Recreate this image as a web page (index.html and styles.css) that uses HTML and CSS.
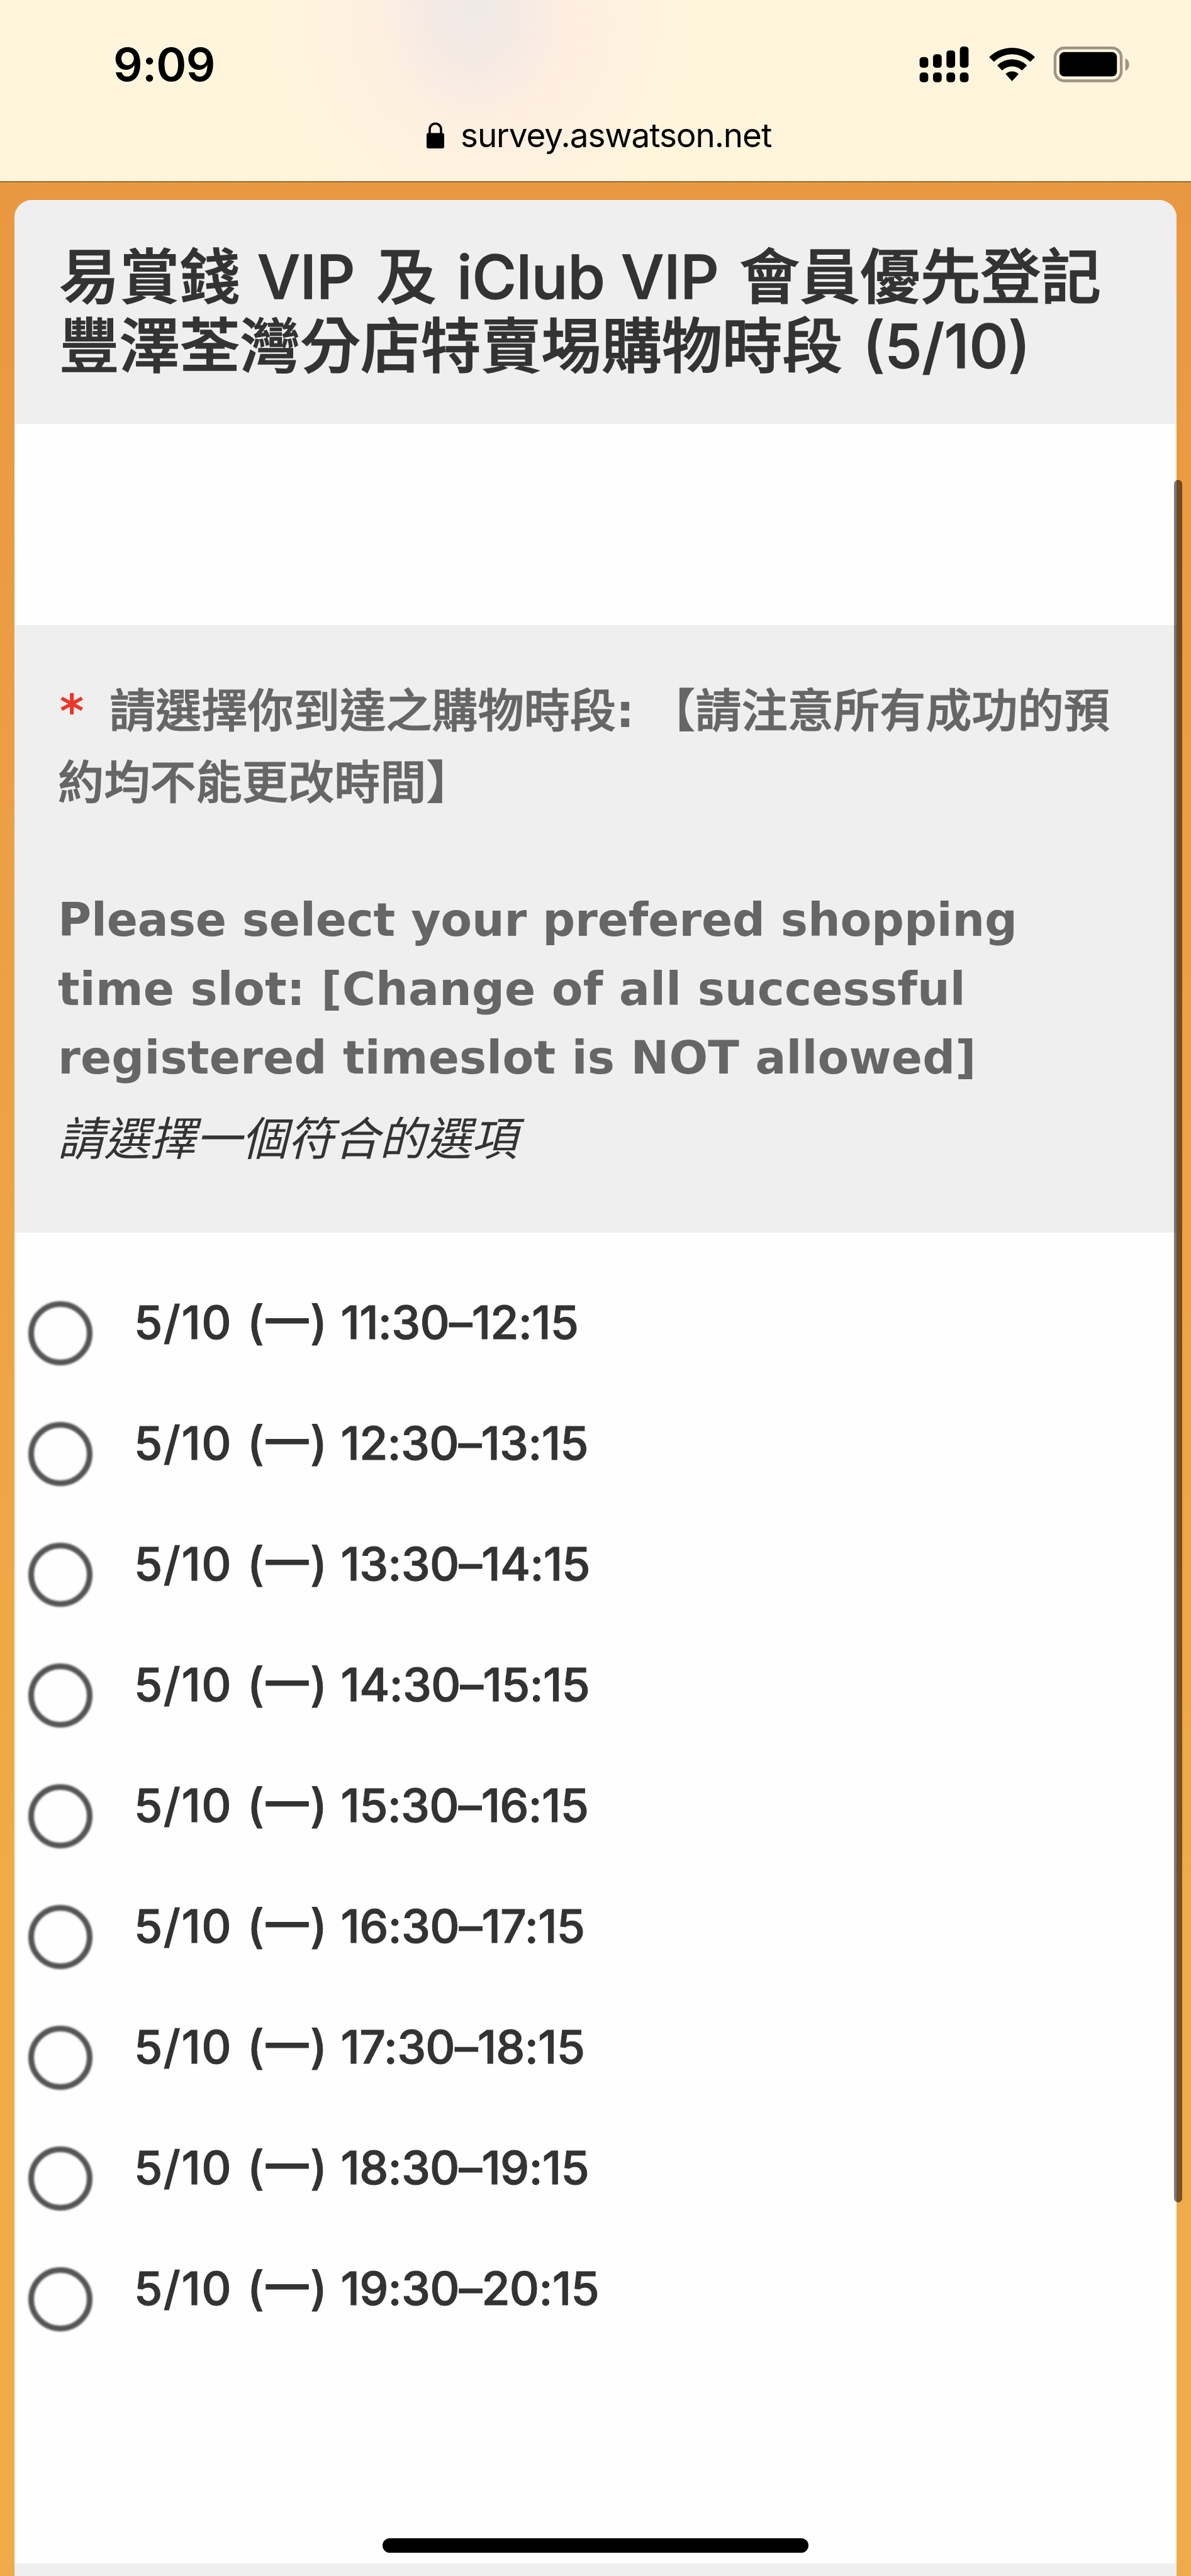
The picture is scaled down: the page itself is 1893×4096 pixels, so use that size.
FILE: index.html
```html
<!DOCTYPE html>
<html lang="zh-Hant">
<head>
    <meta charset="UTF-8">
    <meta name="viewport" content="width=device-width, initial-scale=1.0">
    <title>survey.aswatson.net</title>
    <link rel="stylesheet" href="styles.css">
</head>
<body>
<header class="browser-bar">
    <div class="status-row">
      <span class="clock">9:09</span>
      <svg class="status-icons" viewBox="1482 74 340 60">
        <g fill="#000">
          <rect x="1482.3" y="92" width="14" height="17.3" rx="5" />
          <rect x="1504" y="87.5" width="14" height="21.8" rx="5" />
          <rect x="1525.7" y="81.3" width="14" height="28" rx="5" />
          <rect x="1547.4" y="75" width="14" height="34.3" rx="5" />
          <rect x="1482.3" y="117" width="14" height="15.7" rx="5" />
          <rect x="1504" y="117" width="14" height="15.7" rx="5" />
          <rect x="1525.7" y="117" width="14" height="15.7" rx="5" />
          <rect x="1547.4" y="117" width="14" height="15.7" rx="5" />
          <path d="M1594.8 92a53 53 0 0 1 74 0l-7.5 7.7a42 42 0 0 0-59 0z" />
          <path d="M1607.8 105.5a34 34 0 0 1 48 0l-7.8 8.2a23 23 0 0 0-32.4 0z" />
          <path d="M1621.3 119.5a15 15 0 0 1 21 0l-10.5 11.5z" />
          <rect x="1708.3" y="84" width="93" height="39.3" rx="8" />
        </g>
        <rect x="1701.2" y="77.3" width="107" height="53.2" rx="15" fill="none" stroke="#9f9484" stroke-width="4.5" />
        <path d="M1814.8 94q6.2 3 6.2 10.2t-6.2 10.2z" fill="#9f9484" />
      </svg>
    </div>
    <div class="address">
      <svg class="lock" viewBox="0 0 28 42">
        <rect x="0" y="17.5" width="28" height="24.5" rx="3" />
        <path d="M5 19v-7.5a9 9 0 0 1 18 0V19" fill="none" stroke="#000" stroke-width="3.6" />
      </svg>
      <span>survey.aswatson.net</span>
    </div>
</header>

<main class="survey">
    <h1 class="survey-title">
      <span class="title-line">易賞錢 <span class="vip">VIP</span> 及 <span class="iclub">iClub VIP</span> 會員優先登記</span>
      <span class="title-line">豐澤荃灣分店特賣埸購物時段 <span class="date-suffix">(5/10)</span></span>
    </h1>

    <div class="question">
      <div class="question-zh"><span class="required">*</span>請選擇你到達之購物時段<span class="colon">:</span>【請注意所有成功的預<br>約均不能更改時間】</div>
      <div class="question-en">
        <span class="en-line tight">Please select your prefered shopping</span>
        <span class="en-line">time slot: [Change of all successful</span>
        <span class="en-line">registered timeslot is NOT allowed]</span>
      </div>
      <div class="hint">請選擇一個符合的選項</div>
    </div>

    <form class="options" id="slots">
      <label class="option"><input type="radio" name="slot"><span><span class="date">5/10</span> (一) <span class="time">11:30–12:15</span></span></label>
      <label class="option"><input type="radio" name="slot"><span><span class="date">5/10</span> (一) <span class="time">12:30–13:15</span></span></label>
      <label class="option"><input type="radio" name="slot"><span><span class="date">5/10</span> (一) <span class="time">13:30–14:15</span></span></label>
      <label class="option"><input type="radio" name="slot"><span><span class="date">5/10</span> (一) <span class="time">14:30–15:15</span></span></label>
      <label class="option"><input type="radio" name="slot"><span><span class="date">5/10</span> (一) <span class="time">15:30–16:15</span></span></label>
      <label class="option"><input type="radio" name="slot"><span><span class="date">5/10</span> (一) <span class="time">16:30–17:15</span></span></label>
      <label class="option"><input type="radio" name="slot"><span><span class="date">5/10</span> (一) <span class="time">17:30–18:15</span></span></label>
      <label class="option"><input type="radio" name="slot"><span><span class="date">5/10</span> (一) <span class="time">18:30–19:15</span></span></label>
      <label class="option"><input type="radio" name="slot"><span><span class="date">5/10</span> (一) <span class="time">19:30–20:15</span></span></label>
    </form>
    <div class="survey-footer"></div>
</main>

<div class="scrollbar"></div>
<div class="home-indicator"></div>
</body>
</html>
```
FILE: styles.css
```css
* {
  box-sizing: border-box;
}

body {
  margin: 0;
  height: 4096px;
  overflow: hidden;
  display: flex;
  flex-direction: column;
  position: relative;
  background: linear-gradient(#e89640, #f0aa49 3000px);
  font-family: Inter, "Noto Sans CJK TC", sans-serif;
  color: #333;
}

/* browser bar */
.browser-bar {
  flex: none;
  height: 290px;
  border-bottom: 2px solid #94693a;
  background:
    radial-gradient(ellipse 150px 190px at 752px 10px, #efe9e7 0%, rgba(243, 234, 228, 0.8) 50%, rgba(253, 238, 224, 0) 100%),
    radial-gradient(ellipse 330px 320px at 765px 40px, #feede1 30%, rgba(255, 240, 222, 0) 100%),
    #fff5dd;
  color: #000;
}

.status-row {
  display: flex;
  justify-content: space-between;
  height: 180px;
  padding: 73px 97px 0 180px;
}

.clock {
  font-size: 73px;
  font-weight: 600;
  letter-spacing: -0.8px;
  line-height: 60px;
}

.status-icons {
  width: 335px;
  height: 59px;
}

.address {
  display: flex;
  align-items: flex-start;
  padding: 14px 0 0 678px;
  font-size: 53px;
  letter-spacing: -1.1px;
  line-height: 43px;
}

.lock {
  width: 28px;
  height: 42px;
  margin-right: 26px;
}

/* survey card */
.survey {
  flex: 1;
  display: flex;
  flex-direction: column;
  margin: 28px 23px 0;
  background: #fefefe;
  border-radius: 28px 28px 0 0;
  overflow: hidden;
}

.survey-title {
  flex: none;
  height: 356px;
  margin: 0;
  padding: 67px 0 0 71px;
  background: #efefef;
  font-size: 95.8px;
  font-weight: 500;
  line-height: 110px;
  white-space: nowrap;
  -webkit-text-stroke: 1.5px #333;
}

.title-line {
  display: block;
}

.vip {
  margin: 0 8px 0 2px;
}

.iclub {
  margin: 0 7px 0 7px;
}

.date-suffix {
  margin-left: 6px;
}

.question {
  flex: none;
  height: 966px;
  margin-top: 320px;
  padding: 73px 0 0 69px;
  background: #efefef;
  color: #666;
  font-weight: bold;
  white-space: nowrap;
}

.question-zh {
  font-family: "Noto Sans CJK TC", sans-serif;
  font-size: 73.2px;
  font-weight: 500;
  line-height: 114px;
  -webkit-text-stroke: 1.2px #666;
}

.required,
.colon {
  display: inline-block;
  font-family: "DejaVu Sans", sans-serif;
  font-weight: bold;
  line-height: 1;
  -webkit-text-stroke: 0;
}

.required {
  width: 82px;
  padding-left: 3px;
  color: #ed3528;
}

.colon {
  width: 53px;
}

.question-en {
  margin-top: 114px;
  font-family: "DejaVu Sans", sans-serif;
  font-size: 72.6px;
  letter-spacing: 0.15px;
  line-height: 109.5px;
}

.en-line {
  display: block;
}

.tight {
  letter-spacing: -0.17px;
}

.hint {
  margin-top: 22px;
  color: #333;
  font-family: "Noto Sans CJK TC", sans-serif;
  font-size: 73px;
  font-style: italic;
  font-weight: 400;
  line-height: 90px;
}

/* time slots */
.options {
  flex: 1;
  padding: 109px 0 0 22px;
}

.option {
  display: flex;
  align-items: flex-start;
  height: 192px;
  font-size: 73.3px;
  font-weight: 500;
  line-height: 68px;
  white-space: nowrap;
  -webkit-text-stroke: 1px #333;
}

.option input {
  appearance: none;
  flex: none;
  width: 102px;
  height: 102px;
  margin: 0 66px 0 0;
  border: 9px solid #555;
  border-radius: 50%;
  filter: blur(1.5px);
}

.date {
  margin-right: 4px;
  letter-spacing: 1.5px;
}

.time {
  margin-left: 2px;
  letter-spacing: -0.8px;
}

.survey-footer {
  flex: none;
  height: 20px;
  background: #efefef;
}

/* overlays */
.scrollbar {
  position: absolute;
  top: 763px;
  left: 1866px;
  width: 13px;
  height: 2739px;
  border-radius: 7px;
  background: rgba(0, 0, 0, 0.52);
}

.home-indicator {
  position: absolute;
  bottom: 37px;
  left: 608px;
  width: 677px;
  height: 23px;
  border-radius: 12px;
  background: #000;
}
```
